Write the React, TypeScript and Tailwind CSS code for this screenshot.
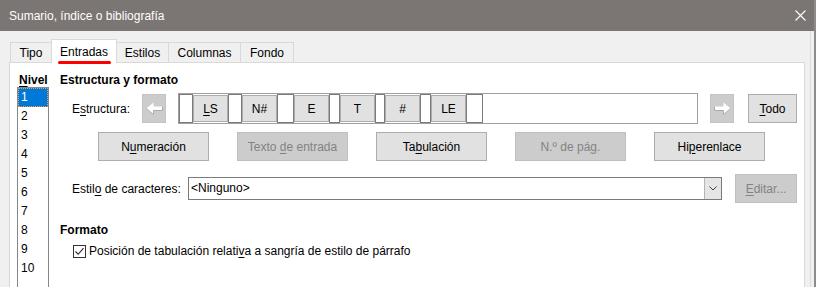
import React from "react";

const font = "font-['Segoe_UI','Liberation_Sans',Arial,sans-serif]";

const Btn: React.FC<{ w: string; disabled?: boolean; children: React.ReactNode }> = ({ w, disabled, children }) => (
  <div
    className={`${w} h-[29px] flex items-center justify-center border text-[12px] ${
      disabled ? "bg-[#cccccc] border-[#bfbfbf] text-[#838383]" : "bg-[#e1e1e1] border-[#adadad] text-black"
    }`}
  >
    <span>{children}</span>
  </div>
);

const U: React.FC<{ children: React.ReactNode }> = ({ children }) => (
  <span className="underline underline-offset-[2px]">{children}</span>
);

const Arrow: React.FC<{ dir: "left" | "right" }> = ({ dir }) => (
  <div className="w-[24px] h-[29px] bg-[#cccccc] border border-[#c4c4c4] flex items-center justify-center">
    <svg width="17" height="13" viewBox="0 0 17 13" className={dir === "right" ? "-scale-x-100" : ""}>
      <path d="M0.5 6.5 L7.5 0.5 L7.5 4.5 L16.5 4.5 L16.5 8.5 L7.5 8.5 L7.5 12.5 Z" fill="#ffffff" />
      <path d="M7.5 8.5 L16.5 8.5 L16.5 4.5" fill="none" stroke="#a8a8a8" strokeWidth="1" />
      <path d="M7.5 8.5 L7.5 12.5 L0.5 6.5" fill="none" stroke="#b0b0b0" strokeWidth="1" />
    </svg>
  </div>
);

const Slot: React.FC<{ w: string }> = ({ w }) => (
  <div className={`${w} h-full bg-white border border-[#7a7a7a]`} />
);

const Chip: React.FC<{ children: React.ReactNode }> = ({ children }) => (
  <div className="w-[35px] h-[27px] my-auto bg-[#e1e1e1] border border-[#adadad] flex items-center justify-center text-[12px]">
    <span>{children}</span>
  </div>
);

export default function App() {
  const tabs = [
    { t: "Tipo", w: "w-[42px]" },
    { t: "Entradas", w: "w-[66px]" },
    { t: "Estilos", w: "w-[53px]" },
    { t: "Columnas", w: "w-[73px]" },
    { t: "Fondo", w: "w-[54px]" },
  ];
  const levels = ["1", "2", "3", "4", "5", "6", "7", "8", "9", "10"];

  return (
    <div className={`w-[816px] h-[287px] overflow-hidden bg-[#f0f0f0] border-r-2 border-[#8c8c8c] flex flex-col ${font} text-[12px] text-black leading-[16px]`}>
      {/* title bar */}
      <div className="h-[31px] shrink-0 bg-[#7b7573] flex items-center justify-between pl-[9px] pr-[8px] text-white text-[12px]">
        <span>Sumario, índice o bibliografía</span>
        <svg width="11" height="11" viewBox="0 0 11 11">
          <path d="M0.5 0.5 L10.5 10.5 M10.5 0.5 L0.5 10.5" stroke="#ffffff" strokeWidth="1.1" />
        </svg>
      </div>

      <div className="flex flex-1 min-h-0">
        <div className="flex flex-col flex-1 pl-[9px]">
          {/* tabs */}
          <div className="h-[31px] shrink-0 flex items-end pl-[1px]">
            {tabs.map(({ t, w }, i) =>
              i === 1 ? (
                <div
                  key={t}
                  className={`relative ${w} h-[24px] -mb-[1px] -ml-[1px] bg-white border border-b-0 border-[#d9d9d9] flex justify-center pt-[4px] z-10`}
                >
                  {t}
                  <div className="absolute left-[6px] right-[5px] bottom-[-1px] h-[3px] rounded-full bg-[#ff0000]" />
                </div>
              ) : (
                <div
                  key={t}
                  className={`${w} h-[20px] bg-[#f0f0f0] border border-b-0 border-[#d9d9d9] flex justify-center pt-[2px] ${
                    i > 1 ? "-ml-[1px]" : ""
                  }`}
                >
                  {t}
                </div>
              )
            )}
          </div>

          {/* panel */}
          <div className="flex-1 bg-white border border-b-0 border-[#d9d9d9] w-[796px] flex">
            {/* level column */}
            <div className="pl-[7px] pt-[9px] flex flex-col w-[50px] shrink-0">
              <div className="font-bold pl-[2px] h-[15px]">
                <U>N</U>ivel
              </div>
              <div className="w-[32px] flex-1 border border-[#828790] border-b-0">
                {levels.map((l, i) =>
                  i === 0 ? (
                    <div key={l} className="h-[19px] bg-[#0078d7] text-white pl-[2px] border border-dotted border-[#f0a040] leading-[17px]">
                      {l}
                    </div>
                  ) : (
                    <div key={l} className="h-[19px] pl-[3px] leading-[19px]">
                      {l}
                    </div>
                  )
                )}
              </div>
            </div>

            {/* main column */}
            <div className="flex-1 flex flex-col pt-[9px]">
              <div className="font-bold">Estructura y formato</div>

              <div className="mt-[5px] h-[31px] flex items-center">
                <div className="w-[82px] pl-[12px]">
                  E<U>s</U>tructura:
                </div>
                <Arrow dir="left" />
                <div className="ml-[12px] w-[520px] h-[31px] border border-[#a0a0a0] bg-white flex items-stretch p-0">
                  <Slot w="w-[14px]" />
                  <Chip>
                    <U>L</U>S
                  </Chip>
                  <Slot w="w-[14px]" />
                  <Chip>N#</Chip>
                  <Slot w="w-[17px]" />
                  <Chip>E</Chip>
                  <Slot w="w-[11px]" />
                  <Chip>T</Chip>
                  <Slot w="w-[10px]" />
                  <Chip>#</Chip>
                  <Slot w="w-[11px]" />
                  <Chip>LE</Chip>
                  <Slot w="w-[17px]" />
                </div>
                <div className="ml-[12px]">
                  <Arrow dir="right" />
                </div>
                <div className="ml-[14px]">
                  <Btn w="w-[49px]">
                    <U>T</U>odo
                  </Btn>
                </div>
              </div>

              <div className="mt-[8px] pl-[38px] flex gap-[28px]">
                <Btn w="w-[111px]">
                  N<U>u</U>meración
                </Btn>
                <Btn w="w-[111px]" disabled>
                  Texto <U>d</U>e entrada
                </Btn>
                <Btn w="w-[111px]">
                  Ta<U>b</U>ulación
                </Btn>
                <Btn w="w-[111px]" disabled>
                  N.º de pá<U>g</U>.
                </Btn>
                <Btn w="w-[111px]">
                  Hi<U>p</U>erenlace
                </Btn>
              </div>

              <div className="mt-[13px] h-[29px] flex items-center">
                <div className="w-[128px] pl-[12px]">
                  Estil<U>o</U> de caracteres:
                </div>
                <div className="w-[534px] h-[23px] border border-[#7a7a7a] bg-white flex">
                  <div className="flex-1 pl-[2px] leading-[21px]">&lt;Ninguno&gt;</div>
                  <div className="w-[17px] h-full bg-[#e5e5e5] border-l border-[#b5b5b5] flex items-center justify-center">
                    <svg width="8" height="5" viewBox="0 0 8 5">
                      <path d="M0.5 0.5 L4 4 L7.5 0.5" fill="none" stroke="#404040" strokeWidth="1" />
                    </svg>
                  </div>
                </div>
                <div className="ml-[13px]">
                  <Btn w="w-[62px]" disabled>
                    <U>E</U>ditar...
                  </Btn>
                </div>
              </div>

              <div className="mt-[19px] font-bold">Formato</div>

              <div className="mt-[5px] pl-[13px] flex items-center gap-[3px]">
                <div className="w-[13px] h-[13px] border border-[#333333] bg-white flex items-center justify-center">
                  <svg width="11" height="11" viewBox="0 0 11 11">
                    <path d="M1.5 5.5 L4.2 8.3 L9.5 2.2" fill="none" stroke="#222222" strokeWidth="1.1" />
                  </svg>
                </div>
                <span>
                  Posición de tabulación relati<U>v</U>a a sangría de estilo de párrafo
                </span>
              </div>
            </div>
          </div>
        </div>
        <div className="w-[7px] flex">
          <div className="w-[3px]" />
          <div className="w-[1px] bg-[#dcdcdc]" />
        </div>
      </div>
    </div>
  );
}
